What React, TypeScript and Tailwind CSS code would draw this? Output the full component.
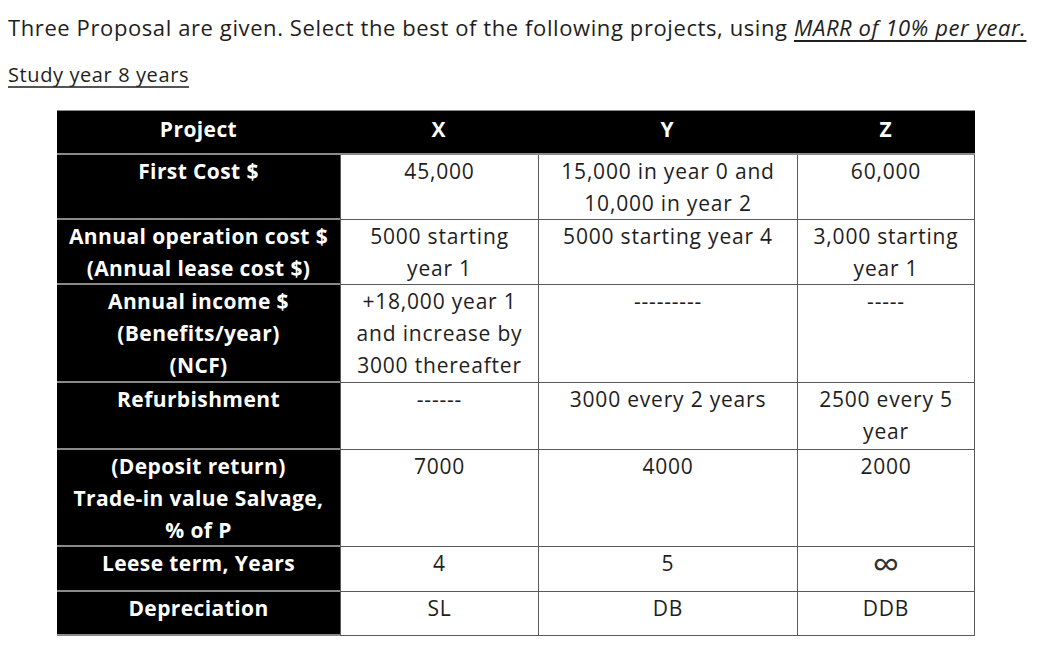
const rows = [
  { label: ["First Cost $"], x: ["45,000"], y: ["15,000 in year 0 and", "10,000 in year 2"], z: ["60,000"] },
  { label: ["Annual operation cost $", "(Annual lease cost $)"], x: ["5000 starting", "year 1"], y: ["5000 starting year 4"], z: ["3,000 starting", "year 1"] },
  { label: ["Annual income $", "(Benefits/year)", "(NCF)"], x: ["+18,000 year 1", "and increase by", "3000 thereafter"], y: ["---------"], z: ["-----"] },
  { label: ["Refurbishment"], x: ["------"], y: ["3000 every 2 years"], z: ["2500 every 5", "year"] },
  { label: ["(Deposit return)", "Trade-in value Salvage,", "% of P"], x: ["7000"], y: ["4000"], z: ["2000"] },
  { label: ["Leese term, Years"], x: ["4"], y: ["5"], z: ["∞"] },
  { label: ["Depreciation"], x: ["SL"], y: ["DB"], z: ["DDB"] },
];

const Lines = ({ lines }: { lines: string[] }) => (
  <>
    {lines.map((l, i) =>
      l === "∞" ? (
        <div key={i} className="text-[38px] leading-[32px] tracking-normal text-[#333]">
          {l}
        </div>
      ) : (
        <div key={i}>{l}</div>
      )
    )}
  </>
);

export default function App() {
  return (
    <div
      className="min-h-[665px] w-[1054px] bg-white text-[#1e1e1e]"
      style={{ fontFamily: "'Open Sans', Lato, sans-serif" }}
    >
      <p className="pl-2 pt-[13px] text-[22px] leading-[28px] tracking-[0.6px]">
        Three Proposal are given. Select the best of the following projects, using{" "}
        <span className="italic underline decoration-[1.5px] underline-offset-[4px] [text-decoration-skip-ink:none]">
          MARR of 10% per year.
        </span>
      </p>
      <p className="mt-[21px] pl-2 text-[20px] leading-[26px] tracking-[0.6px] underline decoration-[1.5px] underline-offset-[4px] decoration-[#555] [text-decoration-skip-ink:none]">
        Study year 8 years
      </p>

      <div className="ml-[57px] mt-[22px] grid w-[918px] grid-cols-[283px_198px_259px_178px] grid-rows-[45px_65px_65px_98px_67px_97px_45px_44px] text-center text-[21px] leading-[32px] tracking-[0.8px]">
        <div className="border-b-2 border-t border-[#8a8a8a] bg-black pt-[2px] font-bold tracking-[0.4px] text-white">Project</div>
        <div className="border-b-2 border-t border-[#8a8a8a] bg-black pt-[2px] font-bold text-white">X</div>
        <div className="border-b-2 border-t border-[#8a8a8a] bg-black pt-[2px] font-bold text-white">Y</div>
        <div className="border-b-2 border-t border-[#8a8a8a] bg-black pt-[2px] font-bold text-white">Z</div>
        {rows.map((r, i) => (
          <div key={i} className="contents">
            <div className="border-b-2 border-[#8a8a8a] bg-black font-bold tracking-[0.4px] text-white">
              <Lines lines={r.label} />
            </div>
            <div className="border-b border-l border-[#5a5a5a]">
              <Lines lines={r.x} />
            </div>
            <div className="border-b border-l border-[#5a5a5a]">
              <Lines lines={r.y} />
            </div>
            <div className="border-b border-l border-r border-[#5a5a5a]">
              <Lines lines={r.z} />
            </div>
          </div>
        ))}
      </div>
    </div>
  );
}
